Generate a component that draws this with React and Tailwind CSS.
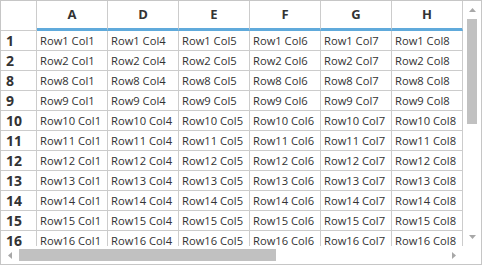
import React from 'react';

const COLS = [
  { label: 'A', n: 1 },
  { label: 'D', n: 4 },
  { label: 'E', n: 5 },
  { label: 'F', n: 6 },
  { label: 'G', n: 7 },
  { label: 'H', n: 8 },
];
const ROWS = [1, 2, 8, 9, 10, 11, 12, 13, 14, 15, 16];

const Arrow = ({ dir }) => {
  const pts = {
    up: '0,4 3.5,0 7,4',
    down: '0,0 3.5,4 7,0',
    left: '4,0 0,3.5 4,7',
    right: '0,0 4,3.5 0,7',
  }[dir];
  const vertical = dir === 'up' || dir === 'down';
  return (
    <svg width={vertical ? 7 : 4} height={vertical ? 4 : 7} className="block">
      <polygon points={pts} fill="#a8a8a8" />
    </svg>
  );
};

export default function App() {
  return (
    <div className="w-[482px] h-[265px] bg-white border border-[#c6c6c6] flex flex-col overflow-hidden font-['Open_Sans',sans-serif] text-[#333]">
      <div className="flex h-[245px]">
        {/* grid */}
        <div className="w-[462px] h-[245px] overflow-hidden">
          <div className="flex h-[30px]">
            <div className="w-[36px] shrink-0 border-r border-b border-[#ccc]" />
            {COLS.map((c) => (
              <div
                key={c.label}
                className="w-[71px] shrink-0 border-r border-r-[#ccc] border-b-[3px] border-b-[#60aadb] flex items-center justify-center text-[13px] font-bold"
              >
                {c.label}
              </div>
            ))}
          </div>
          {ROWS.map((r) => (
            <div key={r} className="flex h-[20px]">
              <div className="w-[36px] shrink-0 border-r border-b border-[#ccc] flex items-center pl-[5px] text-[14px] font-bold leading-none">
                {r}
              </div>
              {COLS.map((c) => (
                <div
                  key={c.label}
                  className="w-[71px] shrink-0 border-r border-b border-[#ccc] flex items-center pl-[3px] text-[11.2px] whitespace-nowrap overflow-hidden leading-none"
                >
                  Row{r} Col{c.n}
                </div>
              ))}
            </div>
          ))}
        </div>
        {/* vertical scrollbar */}
        <div className="w-[18px] flex flex-col items-center">
          <div className="h-[18px] flex items-center justify-center">
            <Arrow dir="up" />
          </div>
          <div className="flex-1 w-full px-[4px]">
            <div className="h-[105px] w-[10px] bg-[#c1c1c1]" />
          </div>
          <div className="h-[18px] flex items-center justify-center">
            <Arrow dir="down" />
          </div>
        </div>
      </div>
      {/* horizontal scrollbar */}
      <div className="flex h-[18px]">
        <div className="w-[462px] flex items-center">
          <div className="w-[18px] flex justify-center">
            <Arrow dir="left" />
          </div>
          <div className="flex-1 h-full py-[3px]">
            <div className="w-[257px] h-full bg-[#c1c1c1]" />
          </div>
          <div className="w-[18px] flex justify-center">
            <Arrow dir="right" />
          </div>
        </div>
        <div className="w-[18px]" />
      </div>
    </div>
  );
}
